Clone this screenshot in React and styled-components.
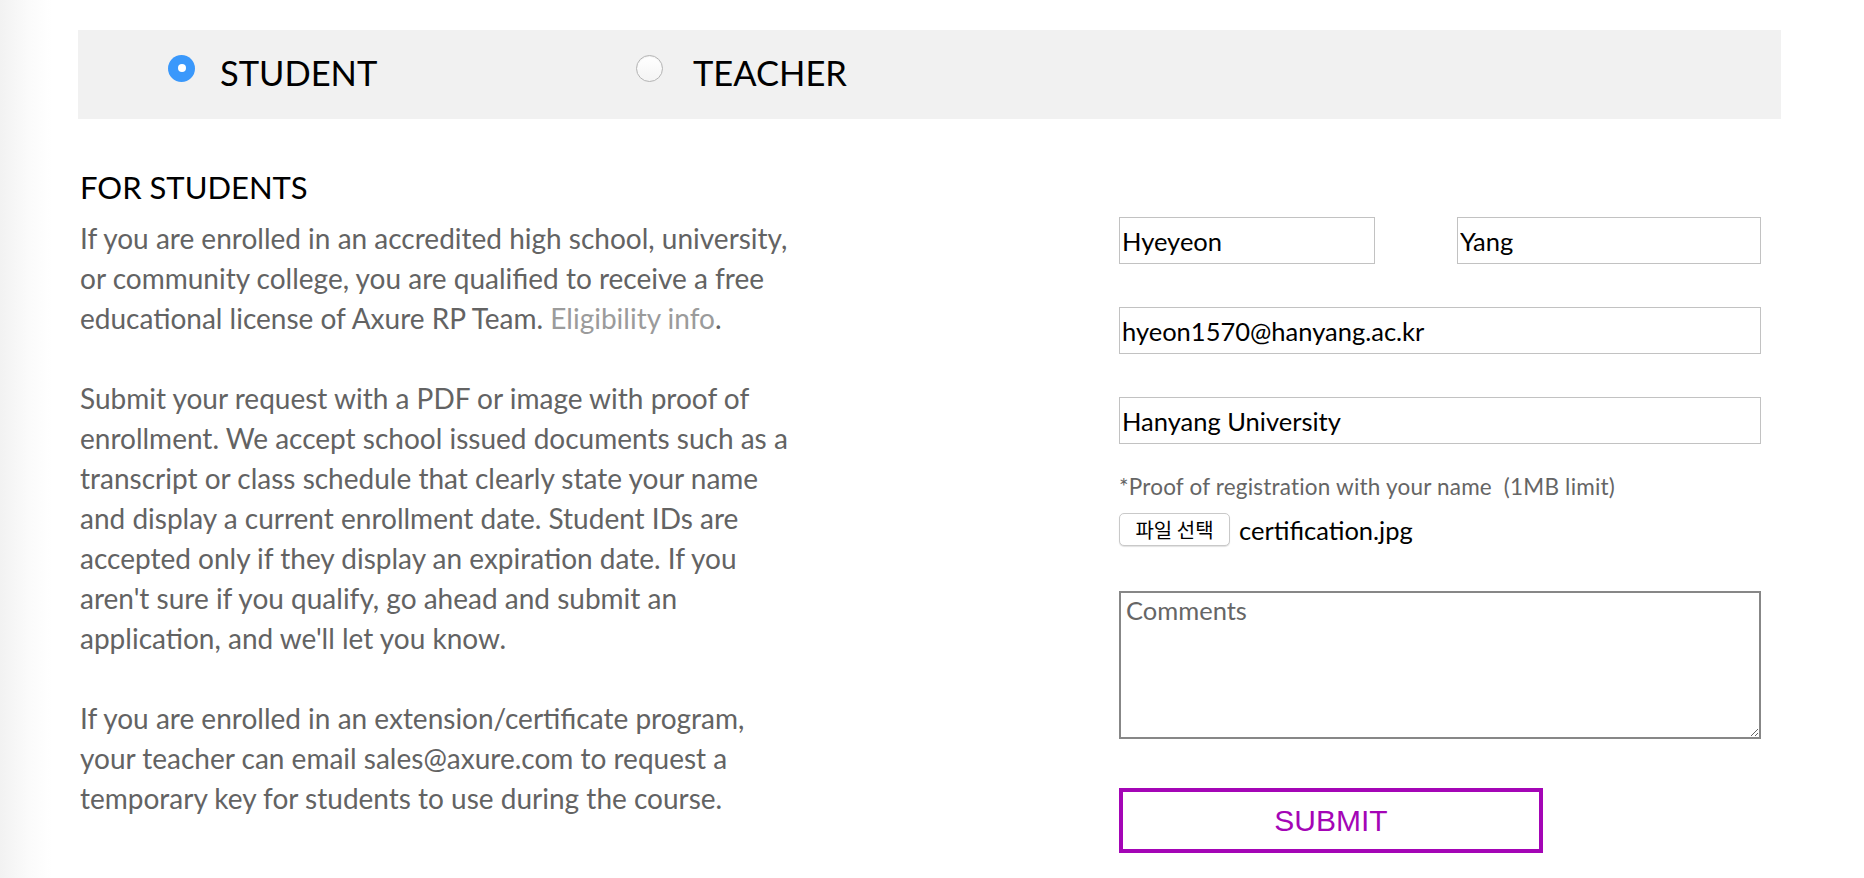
import React from "react";
import styled, { createGlobalStyle } from "styled-components";

const GlobalStyle = createGlobalStyle`
  html, body {
    margin: 0;
    padding: 0;
  }
  body {
    background: linear-gradient(90deg, #f2f2f2 0px, #fbfbfb 30px, #ffffff 52px);
    font-family: Lato, "Noto Sans", sans-serif;
    min-height: 878px;
  }
`;

const Page = styled.div`
  padding: 30px 83px 0 78px;
`;

const RoleBar = styled.div`
  display: flex;
  align-items: center;
  height: 89px;
  padding-left: 90px;
  background: #f1f1f1;
`;

const RoleOption = styled.label`
  display: flex;
  align-items: center;
  width: ${(p) => p.$width}px;
  gap: ${(p) => p.$gap}px;
  cursor: pointer;
`;

const Radio = styled.span`
  box-sizing: border-box;
  flex: none;
  width: 27px;
  height: 27px;
  margin-bottom: 13px;
  border-radius: 50%;
  display: flex;
  align-items: center;
  justify-content: center;
  background: ${(p) => (p.$checked ? "#3a98fb" : "linear-gradient(#ffffff, #f4f4f4)")};
  border: ${(p) => (p.$checked ? "none" : "1px solid #b4b4b4")};
  box-shadow: ${(p) => (p.$checked ? "none" : "inset 0 1px 1px rgba(0,0,0,0.06)")};

  &::after {
    content: "";
    display: ${(p) => (p.$checked ? "block" : "none")};
    width: 8px;
    height: 8px;
    border-radius: 50%;
    background: #ffffff;
  }
`;

const RoleText = styled.span`
  font-size: 34.5px;
  line-height: 36px;
  color: #000;
  padding-bottom: 3px;
`;

const Content = styled.div`
  display: grid;
  grid-template-columns: 720px 642px;
  justify-content: space-between;
  padding: 0 20px 0 2px;
  margin-top: 50px;
`;

const InfoColumn = styled.div`
  display: flex;
  flex-direction: column;
`;

const Heading = styled.h2`
  margin: 0 0 13px;
  font-size: 31px;
  line-height: 36px;
  font-weight: 400;
  color: #000;
`;

const Paragraph = styled.p`
  margin: 0 0 40px;
  font-size: 28px;
  line-height: 40px;
  color: #636363;
`;

const MutedLink = styled.a`
  color: #9b9b9b;
  text-decoration: none;
`;

const FormColumn = styled.form`
  display: flex;
  flex-direction: column;
  padding-top: 48px;
`;

const NameRow = styled.div`
  display: grid;
  grid-template-columns: 256px 304px;
  justify-content: space-between;
`;

const TextInput = styled.input`
  box-sizing: border-box;
  width: 100%;
  height: 47px;
  margin: ${(p) => p.$top || 0}px 0 0;
  padding: 0 2px;
  border: 1px solid #c2c2c2;
  border-radius: 0;
  background: #fff;
  font-family: Lato, sans-serif;
  font-size: 25.5px;
  color: #000;
  outline: none;
`;

const FieldLabel = styled.div`
  margin-top: 30px;
  font-size: 22.5px;
  letter-spacing: 0.2px;
  line-height: 26px;
  color: #656565;
  white-space: pre;
`;

const FileRow = styled.div`
  display: flex;
  align-items: center;
  gap: 9px;
  margin-top: 13px;
`;

const FileButton = styled.button`
  box-sizing: border-box;
  width: 111px;
  height: 33px;
  padding: 0;
  border: 1px solid #c9c9c9;
  border-radius: 5px;
  background: #ffffff;
  box-shadow: 0 1px 1px rgba(0, 0, 0, 0.12);
  font-family: "Noto Sans CJK KR", sans-serif;
  font-size: 20px;
  line-height: 31px;
  color: #000;
`;

const FileName = styled.span`
  font-size: 25.5px;
  color: #000;
`;

const Comments = styled.textarea`
  box-sizing: border-box;
  width: 642px;
  height: 148px;
  margin-top: 45px;
  padding: 2px 5px;
  border: 2px solid #878787;
  border-radius: 0;
  font-family: Lato, sans-serif;
  font-size: 25.5px;
  color: #000;
  outline: none;

  &::placeholder {
    color: #666;
  }
`;

const SubmitButton = styled.button`
  box-sizing: border-box;
  width: 424px;
  height: 65px;
  margin-top: 49px;
  border: 4px solid #a405b6;
  background: #ffffff;
  color: #a405b6;
  font-family: "Liberation Sans", Arial, sans-serif;
  font-size: 30px;
  padding: 0;
`;

export default function App() {
  return (
    <>
      <GlobalStyle />
      <Page>
        <RoleBar>
          <RoleOption $width={468} $gap={25}>
            <Radio $checked />
            <RoleText>STUDENT</RoleText>
          </RoleOption>
          <RoleOption $width={400} $gap={30}>
            <Radio />
            <RoleText>TEACHER</RoleText>
          </RoleOption>
        </RoleBar>

        <Content>
          <InfoColumn>
            <Heading>FOR STUDENTS</Heading>
            <Paragraph>
              If you are enrolled in an accredited high school, university, or community
              college, you are qualified to receive a free educational license of Axure RP
              Team. <MutedLink href="#">Eligibility info</MutedLink>.
            </Paragraph>
            <Paragraph>
              Submit your request with a PDF or image with proof of enrollment. We accept
              school issued documents such as a transcript or class schedule that clearly
              state your name and display a current enrollment date. Student IDs are accepted
              only if they display an expiration date. If you aren't sure if you qualify, go
              ahead and submit an application, and we'll let you know.
            </Paragraph>
            <Paragraph>
              If you are enrolled in an extension/certificate program, your teacher can email
              sales@axure.com to request a temporary key for students to use during the course.
            </Paragraph>
          </InfoColumn>

          <FormColumn onSubmit={(e) => e.preventDefault()}>
            <NameRow>
              <TextInput defaultValue="Hyeyeon" />
              <TextInput defaultValue="Yang" />
            </NameRow>
            <TextInput $top={43} defaultValue="hyeon1570@hanyang.ac.kr" />
            <TextInput $top={43} defaultValue="Hanyang University" />
            <FieldLabel>*Proof of registration with your name  (1MB limit)</FieldLabel>
            <FileRow>
              <FileButton type="button">파일 선택</FileButton>
              <FileName>certification.jpg</FileName>
            </FileRow>
            <Comments placeholder="Comments" />
            <SubmitButton type="submit">SUBMIT</SubmitButton>
          </FormColumn>
        </Content>
      </Page>
    </>
  );
}
